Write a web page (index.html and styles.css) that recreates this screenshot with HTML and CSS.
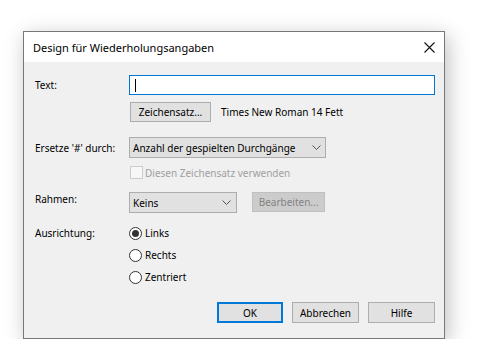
FILE: index.html
```html
<!DOCTYPE html>
<html lang="de">
<head>
    <meta charset="UTF-8">
    <title>Design für Wiederholungsangaben</title>
    <link rel="stylesheet" href="styles.css">
</head>
<body>
    <div class="dialog">
        <div class="titlebar">
            <span class="title">Design für Wiederholungsangaben</span>
            <svg class="close" width="11" height="11" viewBox="0 0 11 11">
                <path d="M0.5 0.5 L10.5 10.5 M10.5 0.5 L0.5 10.5" stroke="#111" stroke-width="1.1" fill="none"/>
            </svg>
        </div>

        <div class="content">
            <div class="row row-text">
                <div class="label">Text:</div>
                <div class="textbox"><span class="caret"></span></div>
            </div>

            <div class="row row-font">
                <div class="label"></div>
                <div class="button font-button">Zeichensatz...</div>
                <span class="font-name">Times New Roman 14 Fett</span>
            </div>

            <div class="row row-replace">
                <div class="label">Ersetze '#' durch:</div>
                <div class="combo combo-wide">
                    <span>Anzahl der gespielten Durchgänge</span>
                    <svg width="9" height="5" viewBox="0 0 9 5"><path d="M0.5 0.5 L4.5 4.5 L8.5 0.5" stroke="#555" fill="none"/></svg>
                </div>
            </div>

            <div class="row row-check">
                <div class="label"></div>
                <span class="checkbox"></span>
                <span class="disabled-text">Diesen Zeichensatz verwenden</span>
            </div>

            <div class="row row-frame">
                <div class="label">Rahmen:</div>
                <div class="combo combo-small">
                    <span>Keins</span>
                    <svg width="9" height="5" viewBox="0 0 9 5"><path d="M0.5 0.5 L4.5 4.5 L8.5 0.5" stroke="#555" fill="none"/></svg>
                </div>
                <div class="button button-disabled">Bearbeiten...</div>
            </div>

            <div class="row row-align">
                <div class="label">Ausrichtung:</div>
                <div class="radios">
                    <div class="radio-item"><span class="radio checked"></span>Links</div>
                    <div class="radio-item"><span class="radio"></span>Rechts</div>
                    <div class="radio-item"><span class="radio"></span>Zentriert</div>
                </div>
            </div>

            <div class="actions">
                <div class="button action default">OK</div>
                <div class="button action">Abbrechen</div>
                <div class="button action">Hilfe</div>
            </div>
        </div>
    </div>
</body>
</html>
```

FILE: styles.css
```css
* {
    box-sizing: border-box;
}
body {
    margin: 0;
    padding: 31px 0 0 23px;
    background: #fff;
    font-family: "Noto Sans", "Segoe UI", sans-serif;
    font-size: 10px;
    color: #000;
}
.dialog {
    width: 422px;
    height: 308px;
    border: 1px solid #777;
    background: #f0f0f0;
    box-shadow: 3px 5px 20px rgba(0, 0, 0, 0.25);
    display: flex;
    flex-direction: column;
    white-space: nowrap;
}
.titlebar {
    height: 30px;
    flex: none;
    background: #fff;
    display: flex;
    align-items: center;
    justify-content: space-between;
    padding: 0 9px 0 9px;
}
.title {
    font-size: 11px;
}
.content {
    padding: 13px 9px 0 11px;
    display: flex;
    flex-direction: column;
}
.row {
    display: flex;
    align-items: center;
}
.label {
    width: 94px;
    flex: none;
}
.textbox {
    flex: 1;
    height: 20px;
    border: 1px solid #0078d7;
    background: #fff;
    display: flex;
    align-items: center;
    padding-left: 5px;
}
.caret {
    width: 1px;
    height: 13px;
    background: #000;
}
.row-font {
    margin-top: 7px;
}
.button {
    height: 20px;
    border: 1px solid #adadad;
    background: #e1e1e1;
    display: flex;
    align-items: center;
    justify-content: center;
}
.font-button {
    width: 81px;
    margin-left: 1px;
}
.font-name {
    margin-left: 10px;
}
.row-replace {
    margin-top: 15px;
}
.combo {
    height: 21px;
    border: 1px solid #adadad;
    background: #e1e1e1;
    display: flex;
    align-items: center;
    justify-content: space-between;
    padding: 0 4px 0 3px;
}
.combo-wide {
    width: 197px;
}
.combo-small {
    width: 108px;
    padding-right: 5px;
}
.row-check {
    margin-top: 8px;
    height: 13px;
}
.checkbox {
    width: 13px;
    height: 13px;
    border: 1px solid #cccccc;
    background: #f7f7f7;
    margin-left: 1px;
    margin-right: 2px;
}
.disabled-text {
    color: #a0a0a0;
}
.row-frame {
    margin-top: 13px;
    align-items: flex-start;
}
.button-disabled {
    margin-left: 15px;
    width: 73px;
    background: #cccccc;
    border-color: #bfbfbf;
    color: #838383;
}
.row-align {
    margin-top: 9px;
    align-items: flex-start;
}
.row-align .label {
    line-height: 22px;
}
.radios {
    display: flex;
    flex-direction: column;
}
.radio-item {
    height: 22px;
    display: flex;
    align-items: center;
}
.radio {
    width: 13px;
    height: 13px;
    border: 1px solid #333;
    border-radius: 50%;
    background: #fff;
    margin-right: 3px;
    display: flex;
    align-items: center;
    justify-content: center;
}
.radio.checked::after {
    content: "";
    width: 7px;
    height: 7px;
    border-radius: 50%;
    background: #333;
}
.actions {
    display: flex;
    justify-content: flex-end;
    gap: 9px;
    margin-top: 14px;
}
.action {
    width: 67px;
    height: 21px;
}
.action.default {
    border: 2px solid #0078d7;
    width: 66px;
}
```
